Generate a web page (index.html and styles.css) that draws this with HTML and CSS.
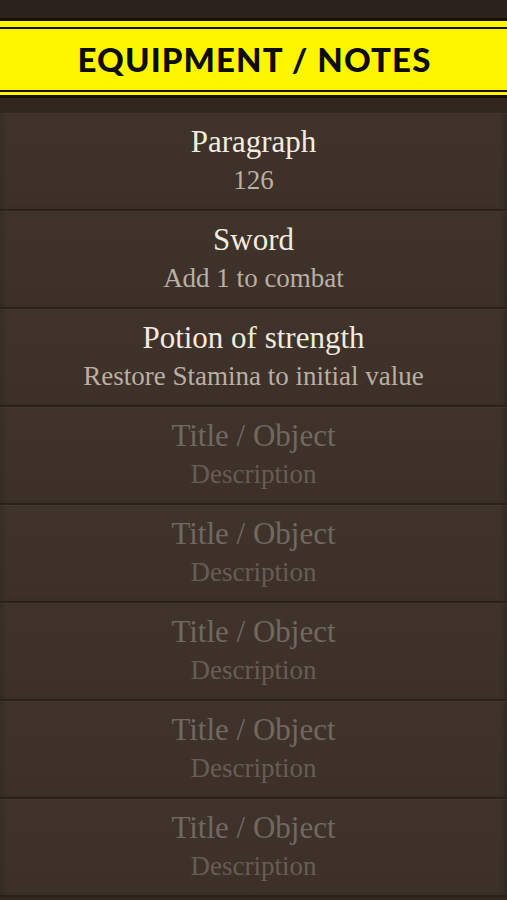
FILE: index.html
```html
<!DOCTYPE html>
<html>
<head>
<meta charset="utf-8">
<link rel="stylesheet" href="styles.css">
</head>
<body>
<div class="screen">
  <div class="topbar"></div>
  <div class="banner">
    <div class="banner-inner"><h1 class="banner-title">EQUIPMENT / NOTES</h1></div>
  </div>
  <div class="list">
    <div class="row"><div class="title">Paragraph</div><div class="sub">126</div></div>
    <div class="row"><div class="title">Sword</div><div class="sub">Add 1 to combat</div></div>
    <div class="row"><div class="title">Potion of strength</div><div class="sub">Restore Stamina to initial value</div></div>
    <div class="row empty"><div class="title">Title / Object</div><div class="sub">Description</div></div>
    <div class="row empty"><div class="title">Title / Object</div><div class="sub">Description</div></div>
    <div class="row empty"><div class="title">Title / Object</div><div class="sub">Description</div></div>
    <div class="row empty"><div class="title">Title / Object</div><div class="sub">Description</div></div>
    <div class="row empty"><div class="title">Title / Object</div><div class="sub">Description</div></div>
  </div>
</div>
</body>
</html>
```

FILE: styles.css
```css
html, body {
  margin: 0;
  padding: 0;
  background: #2a211c;
}
.screen {
  width: 507px;
  height: 900px;
  overflow: hidden;
  background: #31271f;
}
.topbar {
  height: 18px;
  background: #2b221d;
}
.banner {
  background: #fdf600;
  border-top: 3px solid #141008;
  border-bottom: 3px solid #141008;
  padding: 6px 0 3px;
}
.banner-inner {
  height: 61px;
  border-top: 2px solid #141008;
  border-bottom: 2px solid #141008;
  display: flex;
  align-items: center;
  justify-content: center;
}
.banner-title {
  margin: 0;
  font-family: "Lato", "DejaVu Sans", sans-serif;
  font-weight: 900;
  font-size: 33px;
  letter-spacing: 1.1px;
  color: #0e0c08;
  line-height: 1;
  padding-left: 2px;
}
.list {
  padding-top: 15px;
  background: #31271f;
}
.row {
  box-sizing: border-box;
  height: 98px;
  padding-top: 9px;
  text-align: center;
  font-family: "Liberation Serif", "Times New Roman", serif;
  background: linear-gradient(180deg, #3f332b 0%, #3c3029 100%);
  border-bottom: 2px solid #2a211b;
  box-shadow: inset 0 1px 0 rgba(255, 255, 255, 0.04), inset -6px 0 6px -4px rgba(0, 0, 0, 0.25), inset 6px 0 6px -4px rgba(0, 0, 0, 0.15);
}
.title {
  font-size: 31px;
  line-height: 39px;
  color: #f2ebe0;
}
.sub {
  font-size: 27px;
  line-height: 39px;
  color: #b9afa5;
}
.row.empty .title {
  color: #716862;
}
.row.empty .sub {
  color: #675d56;
}
```
